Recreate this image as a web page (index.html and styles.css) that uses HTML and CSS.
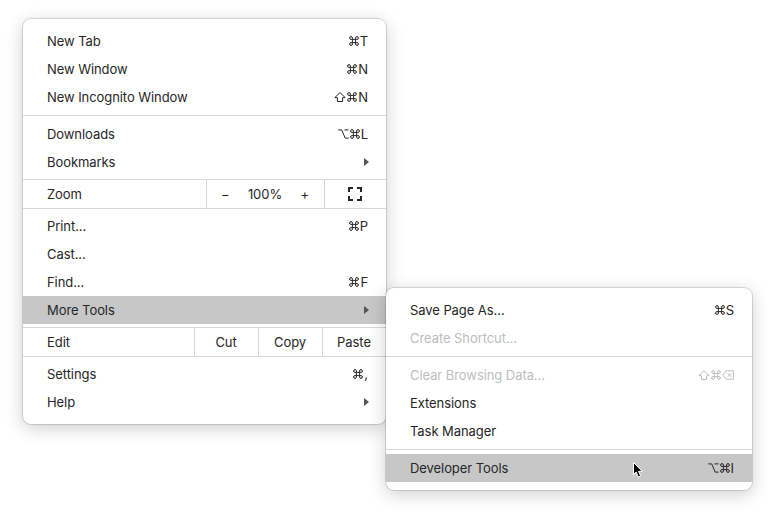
FILE: index.html
```html
<!DOCTYPE html>
<html lang="en">
<head>
<meta charset="utf-8">
<title>Menu</title>
<link rel="stylesheet" href="styles.css">
</head>
<body>
<svg class="defs" aria-hidden="true">
  <symbol id="cmd" viewBox="0 0 10 10"><path d="M3.4 3.4H6.6V6.6H3.4ZM3.4 3.4H2A1.4 1.4 0 1 1 3.4 2ZM6.6 3.4V2A1.4 1.4 0 1 1 8 3.4ZM6.6 6.6H8A1.4 1.4 0 1 1 6.6 8ZM3.4 6.6V8A1.4 1.4 0 1 1 2 6.6Z"/></symbol>
  <symbol id="shift" viewBox="0 0 12 10"><path d="M6 .6 11.2 5.6H8.6V9.5H3.4V5.6H.8Z"/></symbol>
  <symbol id="opt" viewBox="0 0 11 10"><path d="M.3 .9H3.7L7.2 9.1H10.6M6.4 .9H10.6"/></symbol>
  <symbol id="del" viewBox="0 0 12 10"><path d="M4.2 .8H11.4V9.2H4.2L.8 5ZM5.7 3.2 9.3 6.8M9.3 3.2 5.7 6.8"/></symbol>
</svg>
<main class="stage">
  <section class="menu menu-main">
    <div class="item"><span class="label">New Tab</span><span class="keys"><svg class="cmd"><use href="#cmd"/></svg>T</span></div>
    <div class="item"><span class="label">New Window</span><span class="keys"><svg class="cmd"><use href="#cmd"/></svg>N</span></div>
    <div class="item"><span class="label">New Incognito Window</span><span class="keys"><svg class="shift"><use href="#shift"/></svg><svg class="cmd"><use href="#cmd"/></svg>N</span></div>
    <hr>
    <div class="item"><span class="label">Downloads</span><span class="keys"><svg class="opt"><use href="#opt"/></svg><svg class="cmd"><use href="#cmd"/></svg>L</span></div>
    <div class="item"><span class="label">Bookmarks</span><span class="arrow"></span></div>
    <div class="bar zoom">
      <span class="cell name">Zoom</span>
      <span class="cell level"><span>−</span><span>100%</span><span>+</span></span>
      <span class="cell"><svg class="full" viewBox="0 0 14 14"><path d="M1 5V1H5M9 1H13V5M13 9V13H9M5 13H1V9"/></svg></span>
    </div>
    <div class="item"><span class="label">Print...</span><span class="keys"><svg class="cmd"><use href="#cmd"/></svg>P</span></div>
    <div class="item"><span class="label">Cast...</span></div>
    <div class="item"><span class="label">Find...</span><span class="keys"><svg class="cmd"><use href="#cmd"/></svg>F</span></div>
    <div class="item active"><span class="label">More Tools</span><span class="arrow"></span></div>
    <div class="bar edit">
      <span class="cell name">Edit</span>
      <span class="cell">Cut</span>
      <span class="cell">Copy</span>
      <span class="cell">Paste</span>
    </div>
    <div class="item"><span class="label">Settings</span><span class="keys"><svg class="cmd"><use href="#cmd"/></svg>,</span></div>
    <div class="item"><span class="label">Help</span><span class="arrow"></span></div>
  </section>
  <section class="menu menu-sub">
    <div class="item"><span class="label">Save Page As...</span><span class="keys"><svg class="cmd"><use href="#cmd"/></svg>S</span></div>
    <div class="item disabled"><span class="label">Create Shortcut...</span></div>
    <hr>
    <div class="item disabled"><span class="label">Clear Browsing Data...</span><span class="keys"><svg class="shift"><use href="#shift"/></svg><svg class="cmd"><use href="#cmd"/></svg><svg class="del"><use href="#del"/></svg></span></div>
    <div class="item"><span class="label">Extensions</span></div>
    <div class="item"><span class="label">Task Manager</span></div>
    <hr>
    <div class="item active"><span class="label">Developer Tools</span><span class="keys"><svg class="opt"><use href="#opt"/></svg><svg class="cmd"><use href="#cmd"/></svg>I</span></div>
  </section>
  <svg class="cursor" viewBox="0 0 12 18"><path d="M1.5 1.5V13.5L4.2 11 6.3 16 8.6 15 6.5 10.3H10.2Z"/></svg>
</main>
</body>
</html>
```

FILE: styles.css
```css
* { box-sizing: border-box; }

body {
  margin: 0;
  background: #fff;
  color: #262626;
  font: 13px/28px Inter, "Liberation Sans", sans-serif;
  letter-spacing: -.07px;
}

.defs { position: absolute; width: 0; height: 0; }

.stage {
  position: relative;
  display: flex;
  align-items: flex-start;
  width: 775px;
  height: 517px;
  padding: 19px 0 0 23px;
  overflow: hidden;
}

.menu {
  flex: none;
  padding: 8px 0;
  background: #fff;
  border-radius: 8px;
  box-shadow: 0 0 0 1px rgba(0, 0, 0, .13), 0 4px 18px rgba(0, 0, 0, .2);
}

.menu-main { width: 363px; }
.menu-sub { width: 366px; margin-top: 269px; position: relative; }

.item {
  display: flex;
  justify-content: space-between;
  align-items: center;
  height: 28px;
  padding: 0 18px 0 24px;
  white-space: nowrap;
}

.active { background: #c7c7c7; }
.disabled { color: #bdbdbd; }

hr {
  height: 1px;
  margin: 4px 0;
  border: 0;
  background: #d6d6d6;
}

.keys { display: flex; align-items: center; gap: 1px; }

svg {
  flex: none;
  fill: none;
  stroke: currentColor;
  stroke-width: 1;
}

.cmd { width: 10px; height: 10px; }
.shift { width: 12px; height: 10px; }
.opt { width: 11px; height: 10px; }
.del { width: 12px; height: 10px; }

.arrow {
  margin-right: -1px;
  border: solid transparent;
  border-width: 4px 0 4px 5px;
  border-left-color: #555;
}

.bar {
  display: grid;
  height: 30px;
  margin: 3px 0;
  border: solid #d6d6d6;
  border-width: 1px 0;
}

.zoom { grid-template-columns: 183px 118px 62px; }
.edit { grid-template-columns: 171px 64px 64px 64px; }

.cell {
  display: flex;
  align-items: center;
  justify-content: center;
  padding-right: 1px;
  border-left: 1px solid #d6d6d6;
}

.name { justify-content: flex-start; padding-left: 24px; border-left: 0; }
.level { justify-content: space-between; padding: 0 15px 0 14px; }

.full { width: 14px; height: 14px; margin-right: 1px; stroke-width: 2; }

.cursor {
  position: absolute;
  left: 632px;
  top: 461px;
  width: 12px;
  height: 18px;
  fill: #000;
  stroke: #fff;
}
```
